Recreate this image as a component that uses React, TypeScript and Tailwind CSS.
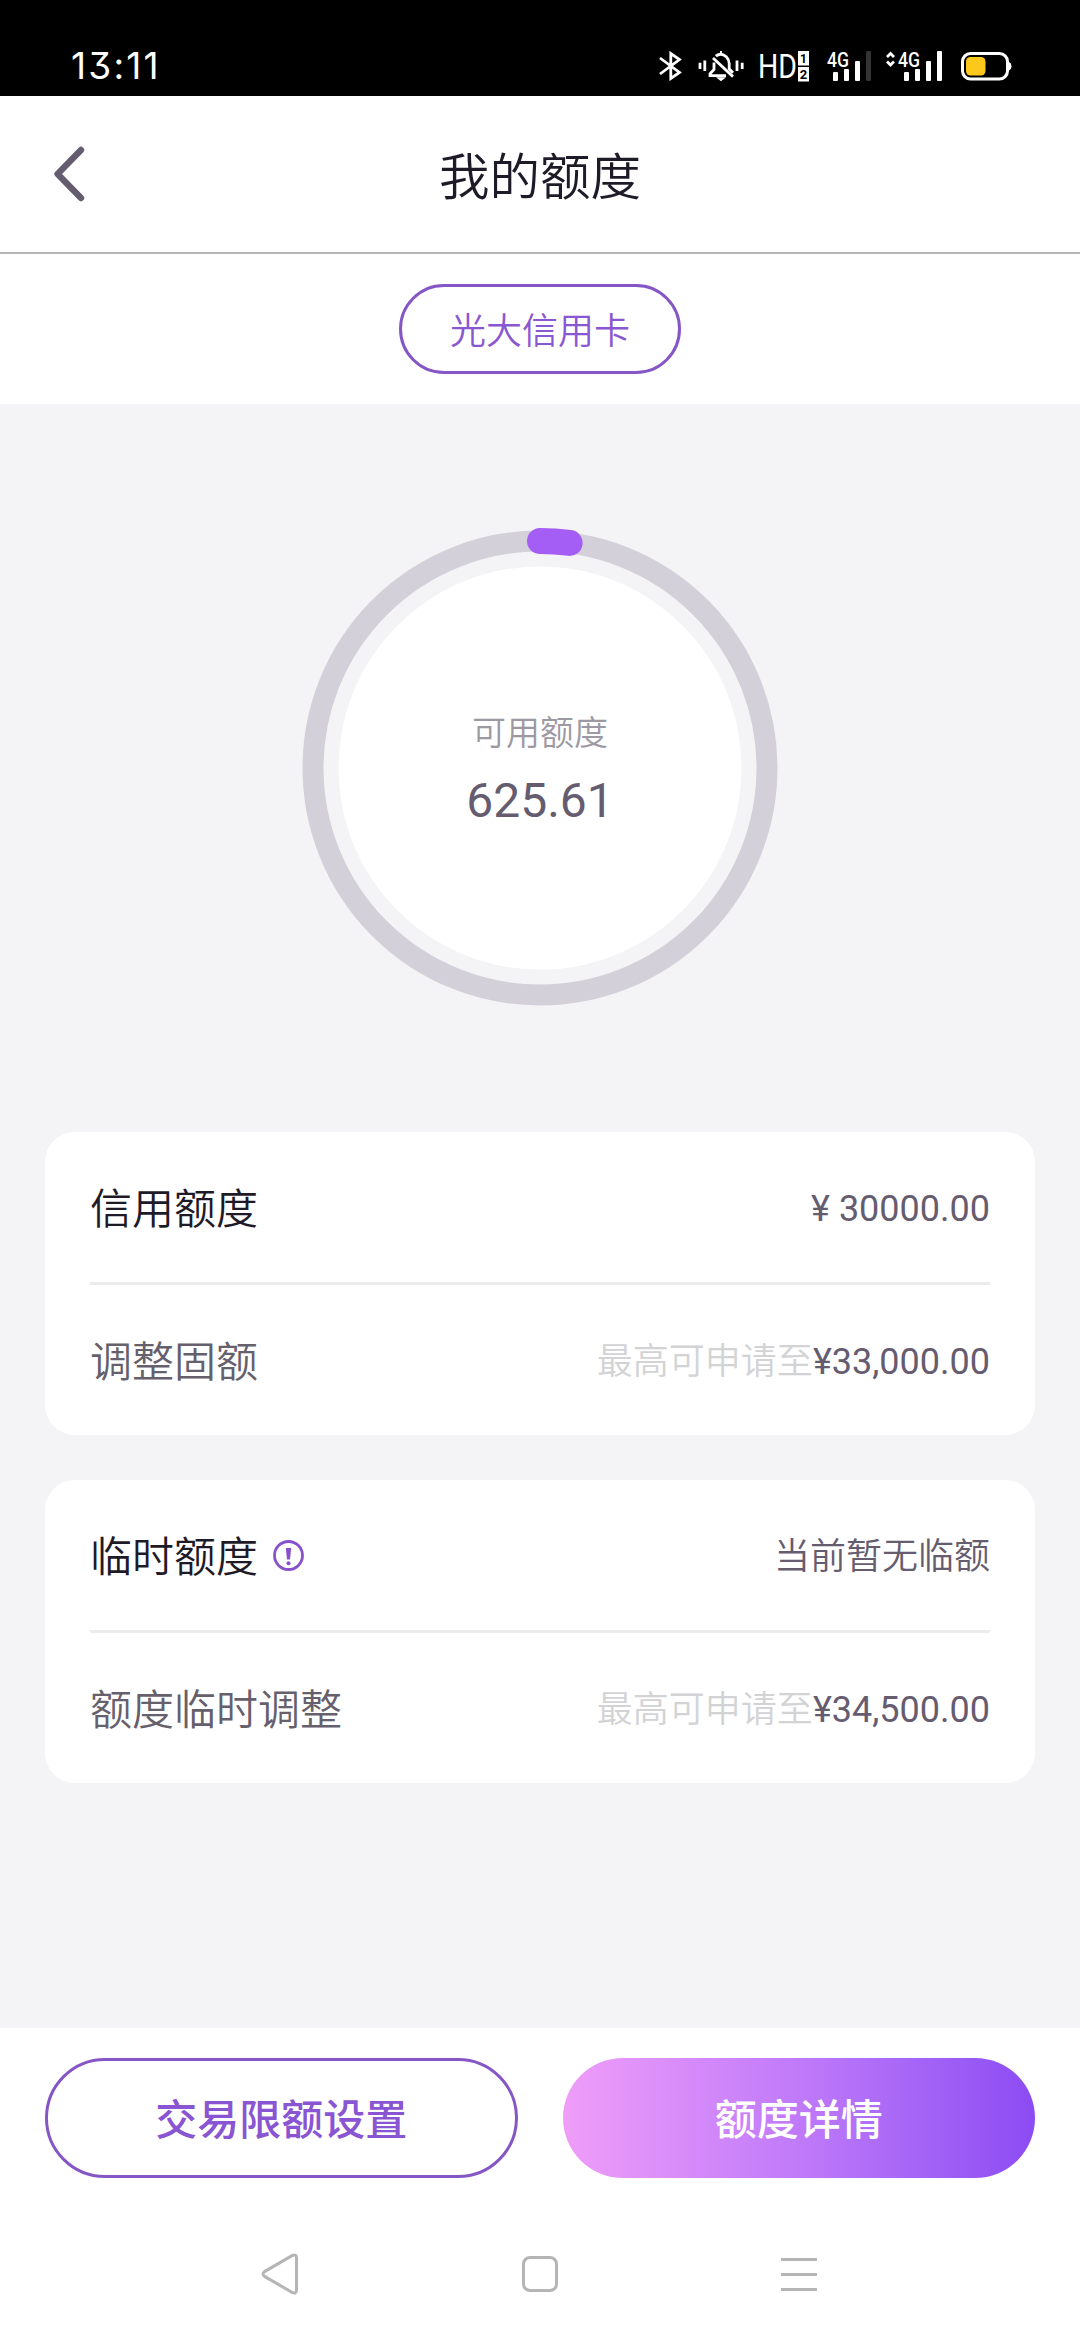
import type { ReactNode } from "react";

const TOTAL_LIMIT = 30000;
const AVAILABLE = 625.61;

function SignalBars({ dimLast = false }: { dimLast?: boolean }) {
  return (
    <g fill="#fff">
      <rect x="6" y="21" width="5" height="9" rx="1" />
      <rect x="17" y="18" width="5" height="12" rx="1" />
      <rect x="28" y="10" width="5" height="20" rx="1" />
      <rect x="39" y="0" width="5" height="30" rx="1" fill={dimLast ? "#333" : "#fff"} />
    </g>
  );
}

function NetworkLabel() {
  return (
    <text
      x="0"
      y="15.5"
      fill="#fff"
      fontSize="21"
      fontWeight="500"
      textLength="22"
      lengthAdjust="spacingAndGlyphs"
      className="font-['Roboto',sans-serif]"
    >
      4G
    </text>
  );
}

function StatusBar() {
  return (
    <div className="flex h-24 shrink-0 items-start justify-between bg-black pt-[51px] pr-[68px] pl-[71px] text-white">
      <span className="font-['Inter',sans-serif] text-[37px] leading-[30px] tracking-[2.2px] [font-feature-settings:'cv09']">
        13:11
      </span>
      <div className="flex">
        {/* Bluetooth */}
        <svg width="24" height="30" viewBox="0 0 24 30" fill="none" stroke="#fff" strokeWidth="2.8">
          <path d="M1 7 L20.5 21.5 L11.8 27.5 V2.5 L20.5 8.5 L1 23" />
        </svg>
        {/* Muted bell */}
        <svg
          className="ml-[15px]"
          width="47"
          height="31"
          viewBox="0 0 47 31"
          fill="none"
          stroke="#fff"
          strokeWidth="2.8"
        >
          <path d="M2 11.7 v6.4 M6.8 9.5 v10.6 M39 9.5 v10.6 M44.2 11.7 v6.4" />
          <path d="M17.8 5.2 Q23 1 28.3 5.8 Q31.2 9 31.2 12.5 V18 L35 21.8" />
          <path d="M15 7 L35 25.6" />
          <path d="M16 11.5 V18.5 L12 22.8 V24.6 H28" />
          <path d="M20.8 27.2 H25.2 L23 29 Z M23 0 V3" strokeWidth="2" />
        </svg>
        {/* HD voice */}
        <svg className="ml-[14px] overflow-visible" width="52" height="31" viewBox="0 0 52 31">
          <text
            x="-1"
            y="27"
            fill="#fff"
            fontSize="33"
            textLength="39"
            lengthAdjust="spacingAndGlyphs"
            className="font-['Roboto',sans-serif]"
          >
            HD
          </text>
          <rect x="39" y="0" width="11" height="14.5" fill="#fff" />
          <rect x="39" y="16" width="11" height="14.5" fill="#fff" />
          <text x="44.5" y="11.5" fontSize="12" fontWeight="700" textAnchor="middle" className="font-['Roboto',sans-serif]">
            1
          </text>
          <text x="44.5" y="28" fontSize="13" fontWeight="700" textAnchor="middle" className="font-['Roboto',sans-serif]">
            2
          </text>
        </svg>
        <svg className="ml-[16px] overflow-visible" width="44" height="30" viewBox="0 0 44 30">
          <NetworkLabel />
          <SignalBars dimLast />
        </svg>
        <svg className="ml-[15px] overflow-visible" width="56" height="30" viewBox="0 0 56 30">
          <path d="M1 6 L4.5 2.5 L8 6 M1 10.5 L4.5 14 L8 10.5" fill="none" stroke="#fff" strokeWidth="2.8" />
          <g transform="translate(12 0)">
            <NetworkLabel />
            <SignalBars />
          </g>
        </svg>
        {/* Battery */}
        <svg className="ml-[19px]" width="51" height="30" viewBox="0 0 51 30">
          <rect x="1.5" y="2.5" width="45" height="25.5" rx="8" fill="none" stroke="#fff" strokeWidth="3" />
          <path d="M48 11 Q50.5 12 50.5 15.2 Q50.5 18.5 48 19.5 Z" fill="#fff" />
          <rect x="5" y="6" width="19.5" height="18.5" rx="4.5" fill="#fdc81c" />
        </svg>
      </div>
    </div>
  );
}

function Header() {
  return (
    <header className="grid h-[158px] shrink-0 grid-cols-[1fr_auto_1fr] items-center border-b-2 border-[#b6b6b6] px-[54px]">
      <svg
        width="32"
        height="56"
        viewBox="0 0 32 56"
        fill="none"
        stroke="#665c70"
        strokeWidth="6.4"
        strokeLinecap="round"
        strokeLinejoin="round"
      >
        <path d="M27 4 L3.6 28 L27 52" />
      </svg>
      <h1 className="pt-[7px] text-[50.5px] font-[350] text-[#1e1a27]">我的额度</h1>
    </header>
  );
}

function LimitRing() {
  const radius = 227;
  const circumference = 2 * Math.PI * radius;
  const used = (AVAILABLE / TOTAL_LIMIT) * circumference;

  return (
    <div className="grid h-[482px] w-[482px] place-items-center">
      <svg className="col-start-1 row-start-1" width="482" height="482" viewBox="-241 -241 482 482" fill="none">
        <circle r="227" stroke="#d3d0d9" strokeWidth="21" />
        <circle r="201.5" fill="#fff" />
        <circle
          r={radius}
          stroke="#a55ef5"
          strokeWidth="26"
          strokeLinecap="round"
          strokeDasharray={`${used} ${circumference}`}
          transform="rotate(-90)"
        />
      </svg>
      <div className="col-start-1 row-start-1 flex flex-col items-center">
        <span className="text-[34px] leading-[50px] font-[350] text-[#9d99a3]">可用额度</span>
        <span className="mt-[15px] text-[48px] leading-[56px] text-[#665c70]">{AVAILABLE}</span>
      </div>
    </div>
  );
}

function Card({ children }: { children: ReactNode }) {
  return (
    <section className="divide-y-3 divide-[#ececee] rounded-[30px] bg-white px-[45px]">
      {children}
    </section>
  );
}

function Row({ label, muted, children }: { label: ReactNode; muted?: boolean; children: ReactNode }) {
  return (
    <div className="box-content flex h-[150px] items-center justify-between">
      <div className={`flex items-center pt-1 text-[42px] font-[350] ${muted ? "text-[#665f6c]" : "text-[#1e1a27]"}`}>
        {label}
      </div>
      <div className="pt-1 text-[36px] text-[#665c70]">{children}</div>
    </div>
  );
}

function InfoIcon() {
  return (
    <svg className="mb-1 ml-[15px]" width="31" height="31" viewBox="0 0 31 31" fill="#8852cc">
      <circle cx="15.5" cy="15.5" r="14" fill="none" stroke="#8852cc" strokeWidth="2.8" />
      <path d="M12.8 8 H18.2 L17 19.5 H14 Z" />
      <circle cx="15.5" cy="23.3" r="2" />
    </svg>
  );
}

function NavBar() {
  return (
    <nav className="flex h-[132px] items-center justify-between px-[261px]">
      <svg width="38" height="42" viewBox="0 0 38 42" fill="none" stroke="#b5b5b5" strokeWidth="3">
        <path d="M31.5 2.4 L3.5 18.6 Q0.5 21 3.5 23.4 L31.5 39.6 Q35.5 41 35.5 37 V5 Q35.5 1 31.5 2.4 Z" />
      </svg>
      <div className="h-9 w-9 rounded-lg border-3 border-[#b5b5b5]" />
      <div className="mr-[2px] flex w-9 flex-col gap-3">
        <div className="h-[3px] bg-[#b5b5b5]" />
        <div className="h-[3px] bg-[#b5b5b5]" />
        <div className="h-[3px] bg-[#b5b5b5]" />
      </div>
    </nav>
  );
}

export default function App() {
  return (
    <div className="flex h-[2340px] w-[1080px] flex-col bg-white font-['Roboto','Noto_Sans_CJK_SC',sans-serif]">
      <StatusBar />
      <Header />

      <div className="flex h-[150px] shrink-0 items-center justify-center">
        <button className="h-[90px] w-[282px] rounded-full border-3 border-[#8656c6] pt-[5px] text-[36px] font-[350] text-[#8a57d2]">
          光大信用卡
        </button>
      </div>

      <main className="flex flex-1 flex-col items-center bg-[#f4f4f7] px-[45px] pt-[123px]">
        <LimitRing />
        <div className="mt-[123px] flex w-full flex-col gap-[45px]">
          <Card>
            <Row label="信用额度">¥ 30000.00</Row>
            <Row label="调整固额" muted>
              <span className="font-[350] text-[#d3d3d6]">最高可申请至</span>¥33,000.00
            </Row>
          </Card>
          <Card>
            <Row
              label={
                <>
                  临时额度
                  <InfoIcon />
                </>
              }
            >
              <span className="font-[350]">当前暂无临额</span>
            </Row>
            <Row label="额度临时调整" muted>
              <span className="font-[350] text-[#d3d3d6]">最高可申请至</span>¥34,500.00
            </Row>
          </Card>
        </div>
      </main>

      <footer className="h-[312px] shrink-0 pt-[30px]">
        <div className="mb-[30px] grid h-[120px] grid-cols-2 gap-[45px] px-[45px] text-[42px] font-medium">
          <button className="rounded-full border-3 border-[#8656c6] pt-1 text-[#8a55d2]">交易限额设置</button>
          <button className="rounded-full bg-linear-to-r from-[#ef9df8] via-[#c07af9] to-[#8c4bf3] pt-1 text-white">
            额度详情
          </button>
        </div>
        <NavBar />
      </footer>
    </div>
  );
}
